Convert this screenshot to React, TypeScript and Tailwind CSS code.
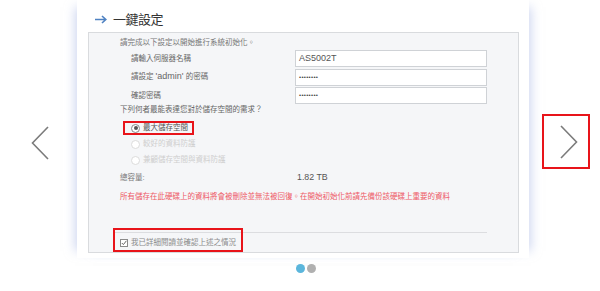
import React from "react";

const font = { fontFamily: '"Liberation Sans", "Noto Sans CJK TC", sans-serif' };

function Radio({ checked, disabled }: { checked?: boolean; disabled?: boolean }) {
  return (
    <span
      className={`flex items-center justify-center w-[9px] h-[9px] rounded-full border bg-white ${
        disabled ? "border-[#dcdcdc]" : "border-[#8a8a8a]"
      }`}
    >
      {checked && <span className="w-[4px] h-[4px] rounded-full bg-[#555]" />}
    </span>
  );
}

function Chevron({ dir }: { dir: "left" | "right" }) {
  return (
    <svg width="18" height="34" viewBox="0 0 18 34" fill="none">
      <path
        d={dir === "left" ? "M17 1 L1.5 17 L17 33" : "M1 1 L16.5 17 L1 33"}
        stroke="#7b7b7b"
        strokeWidth="1.6"
      />
    </svg>
  );
}

export default function App() {
  return (
    <div className="w-[600px] h-[291px] bg-white flex flex-col overflow-hidden text-[7.5px]" style={font}>
      <div className="flex h-[258px]">
        {/* left nav */}
        <div className="w-[77px] pl-[31px] pt-[126px]">
          <Chevron dir="left" />
        </div>

        {/* card */}
        <div className="w-[452px] h-[258px] bg-white shadow-[-9px_0_10px_-7px_rgba(165,180,228,0.55),9px_0_10px_-7px_rgba(165,180,228,0.55)] flex flex-col">
          <div className="h-[32px] flex items-end pb-[5px] pl-[18px] gap-[6px]">
            <svg width="12" height="9" viewBox="0 0 12 9" fill="none" className="mb-[3px]">
              <path d="M0 4.5 H10.5 M7 1 L10.8 4.5 L7 8" stroke="#4f82c2" strokeWidth="1.6" />
            </svg>
            <span className="text-[13px] leading-[15px] tracking-[-0.5px] text-[#333]">一鍵設定</span>
          </div>

          <div className="ml-[11px] w-[431px] h-[221px] border border-[#d9dbde] bg-[#f5f6f8] pl-[31px] pr-[31px] pt-[3px] flex flex-col">
            <div className="h-[14px] flex items-center text-[#777]">請完成以下設定以開始進行系統初始化。</div>

            <div className="h-[17px] flex items-center">
              <span className="w-[175px] pl-[11px] text-[#666]">請輸入伺服器名稱</span>
              <div className="w-[192px] h-[17px] bg-white border border-[#cfd2d6] flex items-center pl-[3px] text-[9px] text-[#555]">
                AS5002T
              </div>
            </div>
            <div className="h-[17px] mt-[1.5px] flex items-center">
              <span className="w-[175px] pl-[11px] text-[#666]">
                請設定 <span className="text-[9px]">'admin'</span> 的密碼
              </span>
              <div className="w-[192px] h-[17px] bg-white border border-[#cfd2d6] flex items-center pl-[3px] text-[6px] tracking-[0.3px] text-[#444]">
                ••••••••
              </div>
            </div>
            <div className="h-[17px] mt-[1.5px] flex items-center">
              <span className="w-[175px] pl-[11px] text-[#666]">確認密碼</span>
              <div className="w-[192px] h-[17px] bg-white border border-[#cfd2d6] flex items-center pl-[3px] text-[6px] tracking-[0.3px] text-[#444]">
                ••••••••
              </div>
            </div>

            <div className="h-[12px] flex items-center text-[#666]">下列何者最能表達您對於儲存空間的需求？</div>

            <div className="mt-[5px] ml-[3px] w-[71px] h-[14px] border-2 border-[#e8141a] flex items-center pl-[6px] gap-[3px] text-[#555]">
              <Radio checked />
              <span>最大儲存空間</span>
            </div>
            <div className="mt-[1px] h-[16px] flex items-center pl-[11px] gap-[3px] text-[#cfcfcf]">
              <Radio disabled />
              <span>較好的資料防護</span>
            </div>
            <div className="h-[16px] flex items-center pl-[11px] gap-[3px] text-[#cfcfcf]">
              <Radio disabled />
              <span>兼顧儲存空間與資料防護</span>
            </div>

            <div className="mt-[2px] h-[16px] flex items-center text-[#777]">
              <span className="w-[177px]">總容量:</span>
              <span className="text-[8.8px] text-[#555]">1.82 TB</span>
            </div>

            <div className="mt-[4px] h-[14px] flex items-center text-[#ee5a66]">
              所有儲存在此硬碟上的資料將會被刪除並無法被回復。在開始初始化前請先備份該硬碟上重要的資料
            </div>

            <div className="mt-[28px] -ml-[6px] h-px bg-[#dcdde0]" />

            <div className="relative h-[19px] flex items-center gap-[3px] text-[#8a8a8a]">
              <span className="flex items-center justify-center w-[8px] h-[8px] border border-[#8a8a8a] bg-white">
                <svg width="6" height="6" viewBox="0 0 6 6" fill="none">
                  <path d="M0.8 3 L2.4 4.6 L5.4 0.8" stroke="#666" strokeWidth="1" />
                </svg>
              </span>
              <span>我已詳細閱讀並確認上述之情況</span>
              <div className="absolute -left-[7px] -top-[5px] w-[130px] h-[24px] border-2 border-[#e8141a]" />
            </div>
          </div>
        </div>

        {/* right nav */}
        <div className="flex-1 pl-[13px] pt-[114px]">
          <div className="w-[48px] h-[55px] border-[2.5px] border-[#e8141a] flex items-center justify-center pl-[6px]">
            <Chevron dir="right" />
          </div>
        </div>
      </div>

      {/* dots */}
      <div className="flex justify-center pl-[11px] pt-[6px] gap-[2px]">
        <span className="w-[9px] h-[9px] rounded-full bg-[#5bb6dc]" />
        <span className="w-[9px] h-[9px] rounded-full bg-[#b0b0b0]" />
      </div>
    </div>
  );
}
